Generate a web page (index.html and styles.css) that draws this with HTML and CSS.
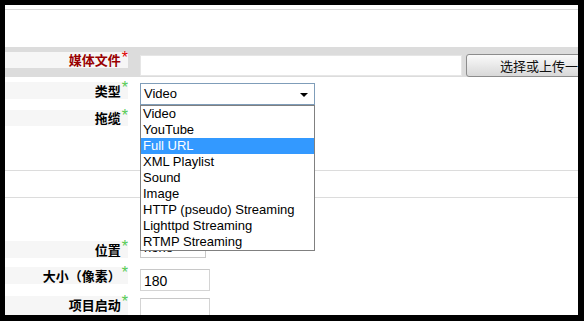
FILE: index.html
```html
<!DOCTYPE html>
<html lang="zh">
<head>
<meta charset="utf-8">
<link rel="stylesheet" href="styles.css">
</head>
<body>
<div class="frame">
  <div class="topline"></div>
  <div class="form">
    <div class="row row-media">
      <div class="label label-active">媒体文件<span class="req red">*</span></div>
      <div class="field">
        <div class="text-input wide"></div>
        <div class="button">选择或上传一个文件</div>
      </div>
    </div>
    <div class="row row-type">
      <div class="label">类型<span class="req">*</span></div>
      <div class="field">
        <div class="select select-type">
          <span class="select-value">Video</span>
          <span class="arrow"></span>
          <ul class="dropdown">
            <li>Video</li>
            <li>YouTube</li>
            <li class="selected">Full URL</li>
            <li>XML Playlist</li>
            <li>Sound</li>
            <li>Image</li>
            <li>HTTP (pseudo) Streaming</li>
            <li>Lighttpd Streaming</li>
            <li>RTMP Streaming</li>
          </ul>
        </div>
      </div>
    </div>
    <div class="row row-cable">
      <div class="label">拖缆<span class="req">*</span></div>
    </div>
    <div class="divider first"></div>
    <div class="divider second"></div>
    <div class="row row-pos">
      <div class="label">位置<span class="req">*</span></div>
      <div class="field">
        <div class="select select-small">
          <span class="select-value">none</span>
          <span class="arrow"></span>
        </div>
      </div>
    </div>
    <div class="row row-size">
      <div class="label">大小（像素）<span class="req">*</span></div>
      <div class="field">
        <div class="text-input small">180</div>
      </div>
    </div>
    <div class="row row-start">
      <div class="label">项目启动<span class="req">*</span></div>
      <div class="field">
        <div class="text-input small"></div>
      </div>
    </div>
  </div>
</div>
</body>
</html>
```

FILE: styles.css
```css
html, body {
  margin: 0;
  padding: 0;
  background: #000;
}
body {
  width: 584px;
  height: 321px;
  overflow: hidden;
  padding: 5px 6px 6px 5px;
  box-sizing: border-box;
}
.frame {
  width: 573px;
  height: 310px;
  background: #fff;
  overflow: hidden;
  font-family: "Liberation Sans", Arial, "Noto Sans CJK SC", sans-serif;
  font-size: 13px;
  color: #000;
}
.topline {
  margin-top: 4px;
  height: 1px;
  background: #dcdcdc;
}
.form {
  margin-top: 37px;
}
.row {
  display: flex;
  align-items: flex-start;
  gap: 12px;
}
.label {
  width: 123px;
  flex: none;
  box-sizing: border-box;
  text-align: right;
  padding-right: 0;
  background: #f6f6f6;
  font-family: "Noto Sans CJK SC", sans-serif;
  font-weight: bold;
  font-size: 13px;
  line-height: 17px;
  height: 17px;
  white-space: nowrap;
}
.label-active {
  color: #990000;
}
.req {
  display: inline-block;
  vertical-align: top;
  font-family: "Liberation Sans", Arial, sans-serif;
  font-size: 16px;
  font-weight: normal;
  line-height: 12px;
  margin-left: 1px;
  color: #55cc55;
}
.req.red {
  color: #dd0000;
}
.field {
  display: flex;
  align-items: flex-start;
  gap: 4px;
}
.row-media {
  height: 30px;
  background: #dcdcdc;
  padding-top: 5px;
  box-sizing: border-box;
}
.row-media .label {
  height: 16px;
  line-height: 16px;
}
.text-input {
  box-sizing: border-box;
  border: 1px solid #d4d4d4;
  border-top-color: #c8c8c8;
  background: #fff;
  height: 22px;
  padding: 3px 3px;
  line-height: 16px;
  font-size: 14px;
}
.text-input.wide {
  width: 322px;
  height: 21px;
  margin-top: 3px;
  border-color: #e6e6e6;
}
.button {
  margin-top: 2px;
  box-sizing: border-box;
  height: 23px;
  padding: 0 20px 0 33px;
  border: 1px solid #8c8c8c;
  border-radius: 3px;
  background: linear-gradient(#fafafa, #e9e9e9 50%, #d8d8d8);
  font-family: "Noto Sans CJK SC", sans-serif;
  font-size: 13px;
  line-height: 21px;
  white-space: nowrap;
  color: #111;
}
.row-type {
  height: 29px;
  padding-top: 5px;
  box-sizing: border-box;
}
.select {
  position: relative;
  box-sizing: border-box;
  border: 1px solid #7f9db9;
  background: #fff;
  height: 22px;
  padding-left: 3px;
  line-height: 20px;
  font-size: 13px;
  display: flex;
  align-items: center;
}
.select-type {
  width: 175px;
  margin-top: 1px;
}
.select-value {
  flex: 1;
}
.arrow {
  width: 0;
  height: 0;
  border-left: 4px solid transparent;
  border-right: 4px solid transparent;
  border-top: 4px solid #000;
  margin-right: 6px;
  margin-top: 1px;
}
.dropdown {
  position: absolute;
  left: -1px;
  top: 21px;
  width: 175px;
  box-sizing: border-box;
  margin: 0;
  padding: 0;
  list-style: none;
  background: #fff;
  border: 1px solid #808080;
  z-index: 5;
}
.dropdown li {
  height: 16px;
  line-height: 16px;
  padding-left: 2px;
  font-size: 13px;
  white-space: nowrap;
}
.dropdown li.selected {
  background: #3399ff;
  color: #fff;
}
.row-cable {
  padding-top: 4px;
  height: 64px;
  box-sizing: border-box;
}
.row-cable .label {
  height: 16px;
  line-height: 16px;
}
.divider {
  height: 1px;
  background: #dcdcdc;
}
.divider.second {
  margin-top: 26px;
}
.row-pos {
  margin-top: 40px;
  height: 29px;
}
.row-pos .label {
  margin-top: 3px;
}
.select-small {
  width: 66px;
  height: 20px;
  border-color: #c9c9c9;
}
.row-size {
  height: 29px;
}
.row-size .text-input {
  margin-top: 2px;
}
.text-input.small {
  width: 70px;
}
.row-start .label {
  height: 20px;
}
.row-start .text-input {
  margin-top: 2px;
}
```
